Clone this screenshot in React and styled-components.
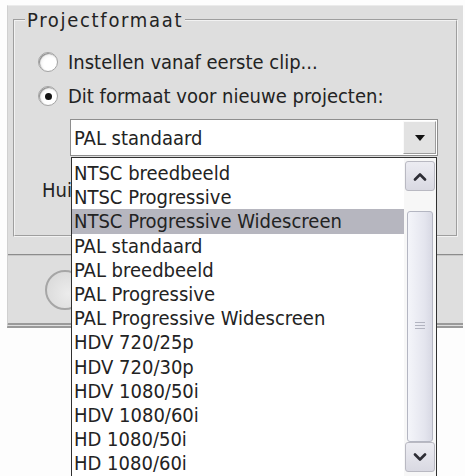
import React from 'react'
import styled, { createGlobalStyle } from 'styled-components'

const formats = [
    'NTSC breedbeeld',
    'NTSC Progressive',
    'NTSC Progressive Widescreen',
    'PAL standaard',
    'PAL breedbeeld',
    'PAL Progressive',
    'PAL Progressive Widescreen',
    'HDV 720/25p',
    'HDV 720/30p',
    'HDV 1080/50i',
    'HDV 1080/60i',
    'HD 1080/50i',
    'HD 1080/60i',
]

const Chevron = ({ up }) => (
    <svg width="14" height="9" viewBox="0 0 14 9">
        <polyline
            points={up ? '2,7.5 7,2.5 12,7.5' : '2,1.5 7,6.5 12,1.5'}
            fill="none"
            stroke="#2c2c34"
            strokeWidth="2.6"
            strokeLinecap="round"
            strokeLinejoin="round"
        />
    </svg>
)

const App = () => {
    return (
        <Page>
            <GlobalStyle />
            <Window>
                <Group>
                    <Legend>Projectformaat</Legend>
                    <RadioRow>
                        <Radio />
                        <span>Instellen vanaf eerste clip...</span>
                    </RadioRow>
                    <RadioRow>
                        <Radio checked />
                        <span>Dit formaat voor nieuwe projecten:</span>
                    </RadioRow>
                    <Combo>
                        <ComboText>PAL standaard</ComboText>
                        <ComboButton>
                            <svg width="10" height="6" viewBox="0 0 10 6">
                                <polygon points="0,0 10,0 5,6" fill="#111" />
                            </svg>
                        </ComboButton>
                    </Combo>
                    <Label>Huidig</Label>
                </Group>
                <Divider />
                <Footer>
                    <RoundButton />
                </Footer>
            </Window>

            <DropList>
                <Items>
                    {formats.map((f, i) => (
                        <Item key={f} selected={i === 2}>{f}</Item>
                    ))}
                </Items>
                <Scrollbar>
                    <ScrollButton><Chevron up /></ScrollButton>
                    <Track>
                        <Thumb>
                            <Grip />
                        </Thumb>
                    </Track>
                    <ScrollButton><Chevron /></ScrollButton>
                </Scrollbar>
            </DropList>
        </Page>
    )
}

export default App


const GlobalStyle = createGlobalStyle`
    html, body {
        margin: 0;
        padding: 0;
        background: #fdfdfd;
    }
    body {
        font-family: "DejaVu Sans", "Liberation Sans", sans-serif;
        font-stretch: condensed;
        font-size: 20px;
        color: #232323;
    }
`

const Page = styled.div`
    position: relative;
    width: 465px;
    height: 476px;
    overflow: hidden;
    box-sizing: border-box;
    padding: 5px 2px 0 7px;
`

const Window = styled.div`
    height: 323px;
    box-sizing: border-box;
    background: #dedede;
    border-top: 1px solid #ebebeb;
    border-left: 1px solid #d0d0d0;
    border-bottom: 5px double #9a9a9a;
    display: flex;
    flex-direction: column;
`

const Group = styled.fieldset`
    margin: 3px 5px 0 5px;
    height: 228px;
    box-sizing: border-box;
    padding: 14px 10px 0 10px;
    border: 2px groove #f2f2f2;
    font: inherit;
`

const Legend = styled.legend`
    padding: 0 2px;
    line-height: 22px;
    font-family: "DejaVu Sans", "Liberation Sans", sans-serif;
    font-stretch: condensed;
    font-size: 20px;
    letter-spacing: 1.7px;
`

const RadioRow = styled.div`
    display: flex;
    align-items: center;
    gap: 10px;
    height: 34px;
    margin-left: 13px;
`

const Radio = styled.span`
    width: 20px;
    height: 20px;
    border-radius: 50%;
    box-sizing: border-box;
    border: 1px solid #a4a4a4;
    background: radial-gradient(circle at 62% 62%, #ffffff 40%, #e2e2e2 100%);
    box-shadow: inset 1px 1px 1px #8a8a8a;
    display: flex;
    align-items: center;
    justify-content: center;

    &::after {
        content: '';
        width: 7px;
        height: 7px;
        border-radius: 50%;
        background: #141414;
        display: ${p => (p.checked ? 'block' : 'none')};
    }
`

const Combo = styled.div`
    margin: 6px 0 0 45px;
    width: 368px;
    height: 37px;
    box-sizing: border-box;
    border: 1px solid #8e8e8e;
    background: #fff;
    display: flex;
    align-items: center;
    padding: 1px;
`

const ComboText = styled.span`
    flex: 1;
    padding-left: 2px;
`

const ComboButton = styled.span`
    width: 33px;
    height: 100%;
    box-sizing: border-box;
    background: #e2e2e2;
    border-top: 1px solid #fafafa;
    border-left: 1px solid #fafafa;
    border-right: 1px solid #9c9c9c;
    border-bottom: 1px solid #9c9c9c;
    display: flex;
    align-items: center;
    justify-content: center;
`

const Label = styled.div`
    margin: 23px 0 0 17px;
    height: 22px;
    line-height: 22px;
    white-space: nowrap;
`

const Divider = styled.div`
    margin-top: 17px;
    height: 1px;
    background: #8c8c8c;
    border-bottom: 1px solid #c8c8c8;
`

const Footer = styled.div`
    flex: 1;
    padding: 14px 0 0 37px;
`

const RoundButton = styled.div`
    width: 40px;
    height: 40px;
    border-radius: 50%;
    box-sizing: border-box;
    border: 2px solid #a6a6a6;
    background: radial-gradient(circle at 60% 60%, #ececec, #d6d6d6);
`

const DropList = styled.div`
    position: absolute;
    left: 71px;
    top: 157px;
    width: 366px;
    height: 324px;
    box-sizing: border-box;
    border: 1px solid #303030;
    background: #fff;
    display: flex;
`

const Items = styled.div`
    flex: 1;
    padding-top: 3px;
`

const Item = styled.div`
    height: 24.2px;
    line-height: 24.2px;
    padding-left: 2px;
    white-space: nowrap;
    background: ${p => (p.selected ? '#b6b6bf' : 'transparent')};
`

const Scrollbar = styled.div`
    width: 32px;
    box-sizing: border-box;
    padding: 3px 1px 0 1px;
    background: #f7f7f7;
    display: flex;
    flex-direction: column;
`

const ScrollButton = styled.div`
    height: 30px;
    box-sizing: border-box;
    border: 1px solid #b9b9c2;
    border-radius: 3px;
    background: linear-gradient(180deg, #ececf2, #d9d9e2);
    display: flex;
    align-items: center;
    justify-content: center;
`

const Track = styled.div`
    height: 251px;
    box-sizing: border-box;
    padding-top: 20px;
    display: flex;
`

const Thumb = styled.div`
    flex: 1;
    margin: 0 2px;
    border: 1px solid #b4b6c2;
    border-radius: 3px;
    background: linear-gradient(90deg, #f4f5fa, #e4e5ee 70%, #d8d9e4);
    display: flex;
    align-items: center;
    justify-content: center;
`

const Grip = styled.div`
    width: 10px;
    height: 9px;
    background: repeating-linear-gradient(180deg, #b2b4c0 0 1px, transparent 1px 3px);
`
